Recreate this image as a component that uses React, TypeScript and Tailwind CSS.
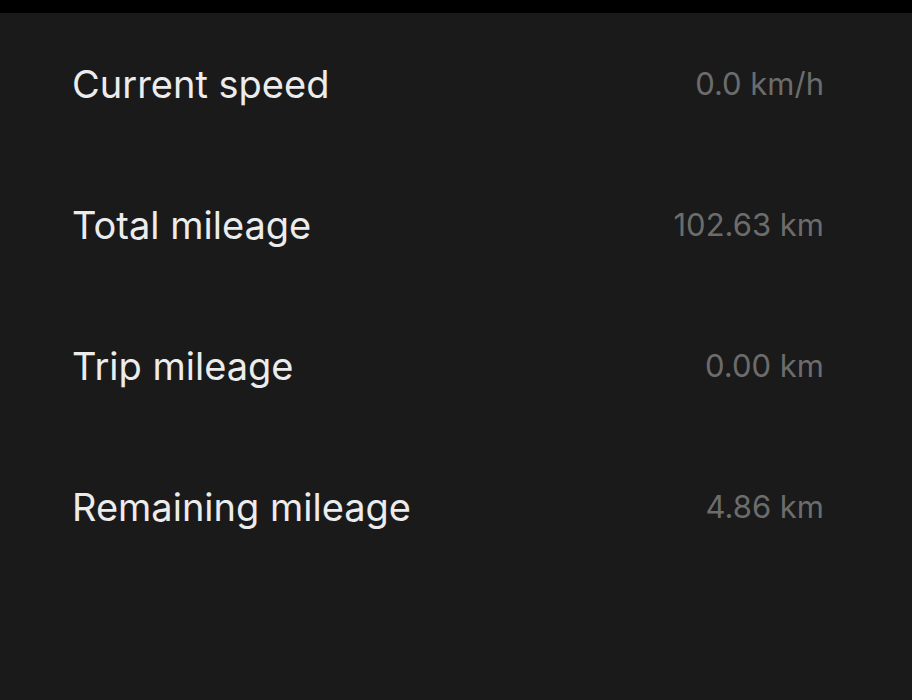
const rows = [
  { label: "Current speed", value: "0.0 km/h" },
  { label: "Total mileage", value: "102.63 km" },
  { label: "Trip mileage", value: "0.00 km" },
  { label: "Remaining mileage", value: "4.86 km" },
]

export default function App() {
  return (
    <div className="min-h-[700px] bg-[#1a1a1a] font-['Inter',sans-serif]">
      <div className="h-[13px] bg-black"></div>
      <div className="flex flex-col pl-[72px] pr-[88px]">
        {rows.map((row) => (
          <div key={row.label} className="flex h-[141px] items-center justify-between">
            <span className="text-[38px] leading-none text-[#ececec]">{row.label}</span>
            <span className="text-[31px] leading-none text-[#6c6c6c]">{row.value}</span>
          </div>
        ))}
      </div>
    </div>
  )
}
